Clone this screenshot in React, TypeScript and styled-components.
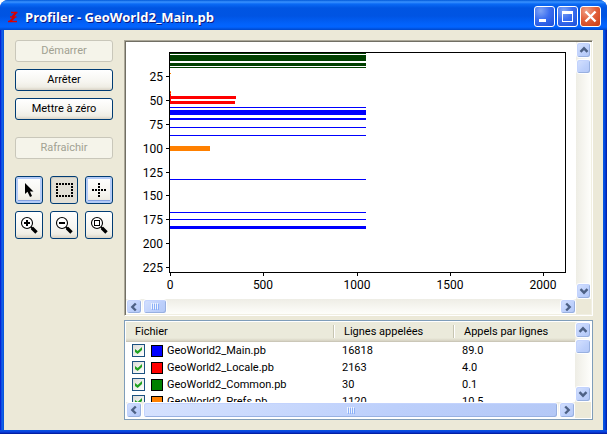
import React from "react";
import styled, { createGlobalStyle, css } from "styled-components";

const GlobalStyle = createGlobalStyle`
  * { box-sizing: border-box; }
  body { margin: 0; background: #fff; }
  button { font: inherit; padding: 0; margin: 0; }
`;

const AppWindow = styled.main`
  display: flex;
  flex-direction: column;
  min-height: 100vh;
  overflow: hidden;
  border-radius: 8px 8px 0 0;
  background: linear-gradient(90deg, #0019cf 0, #0831d9 1px, #166aee 2px, #0855dd 3px, #0855dd calc(100% - 3px), #0140e0 calc(100% - 2px), #001da0 100%);
  font-family: Roboto, "Liberation Sans", sans-serif;
  font-size: 12px;
  color: #000;
`;

const TitleBar = styled.header`
  display: flex;
  align-items: center;
  gap: 7px;
  height: 30px;
  padding: 3px 6px 0 8px;
  background: linear-gradient(180deg, #0058d8 0, #3a93ff 2px, #0a6af5 4px, #0055e2 8px, #0054e3 16px, #0262fb 24px, #0264ff 27px, #0047ca 30px);
`;

const Title = styled.h1`
  flex: 1;
  margin: 0;
  font-family: "Open Sans", "Noto Sans", sans-serif;
  font-size: 13px;
  line-height: 20px;
  font-weight: 700;
  color: #fff;
  text-shadow: 1px 1px 0 #0a1883;
  white-space: nowrap;
`;

const CaptionButtons = styled.div`
  display: flex;
  gap: 2px;
`;

const CaptionButton = styled.button<{ $danger?: boolean }>`
  display: flex;
  width: 21px;
  height: 21px;
  border: 1px solid #fff;
  border-radius: 3px;
  background: ${(p) =>
    p.$danger
      ? "radial-gradient(circle at 30% 20%, #f0a088 0, #e3613c 45%, #c93b12 100%)"
      : "radial-gradient(circle at 30% 20%, #7fa4f5 0, #3a6df0 45%, #1c4fd8 100%)"};
`;

const Body = styled.div`
  flex: 1;
  display: flex;
  gap: 11px;
  margin: 0 4px;
  padding: 10px 10px 10px 11px;
  background: #ece9d8;
`;

const BottomEdge = styled.div`
  height: 4px;
  background: linear-gradient(180deg, #0855dd, #0a3fe0 50%, #001590);
`;

const Sidebar = styled.div`
  display: flex;
  flex-direction: column;
  width: 98px;
  flex: none;
`;

const ButtonStack = styled.div`
  display: flex;
  flex-direction: column;
  gap: 7px;
  margin-bottom: 17px;
`;

const raised = css`
  border: 1px solid #003c74;
  border-radius: 3px;
  background: linear-gradient(180deg, #fff 0, #f6f5f0 60%, #efede4 85%, #d9d3c6 100%);
`;

const PushButton = styled.button`
  ${raised}
  height: 22px;
  line-height: 20px;
  font-size: 11px;
  color: #000;
  &:disabled {
    color: #a1a192;
    border-color: #c9c7ba;
    background: #f5f4ea;
  }
`;

const ToolGrid = styled.div`
  display: grid;
  grid-template-columns: repeat(3, 28px);
  justify-content: space-between;
  row-gap: 7px;
`;

const ToolButton = styled.button<{ $look?: "focus" | "pressed" }>`
  ${raised}
  display: grid;
  place-items: center;
  height: 28px;
  ${(p) => p.$look === "focus" && css`box-shadow: inset 0 0 0 2px #b4cbf7, inset 0 -3px 0 #829fe0;`}
  ${(p) => p.$look === "pressed" && css`background: #e2dfd5; box-shadow: inset 1px 1px 1px #cbc8bd;`}
`;

const Panels = styled.div`
  flex: 1;
  min-width: 0;
  display: flex;
  flex-direction: column;
  gap: 4px;
`;

const ChartPanel = styled.section`
  flex: 1;
  display: grid;
  grid-template: minmax(0, 1fr) 15px / minmax(0, 1fr) 15px;
  border: 1px solid;
  border-color: #aca899 #fff #fff #aca899;
  box-shadow: inset 1px 1px 0 #716f64, inset -1px -1px 0 #f1efe2;
  padding: 1px;
`;

const ChartSvg = styled.svg`
  display: block;
  width: 100%;
  height: 100%;
  background: #fff;
  font-family: Roboto, "Liberation Sans", sans-serif;
  font-size: 12px;
`;

const ListPanel = styled.section`
  display: grid;
  grid-template: minmax(0, 1fr) 16px / minmax(0, 1fr) 16px;
  height: 100px;
  border: 1px solid #7f9db9;
  background: #ece9d8;
  box-shadow: inset 0 0 0 1px #fff;
  padding: 1px;
`;

const ListView = styled.div`
  overflow: hidden;
  background: #fff;
`;

const Table = styled.table`
  width: 100%;
  table-layout: fixed;
  border-collapse: separate;
  border-spacing: 0;
  font-size: 11px;
`;

const Col = styled.col<{ $w?: number }>`
  width: ${(p) => (p.$w ? `${p.$w}px` : "auto")};
`;

const HeadCell = styled.th`
  height: 20px;
  padding: 0 0 0 9px;
  text-align: left;
  font-weight: 400;
  line-height: 18px;
  white-space: nowrap;
  border-bottom: 1px solid #cbc7b8;
  background:
    linear-gradient(#c7c5b2, #c7c5b2) right 1px top 3px / 1px 13px no-repeat,
    linear-gradient(#fff, #fff) right 0 top 3px / 1px 13px no-repeat,
    linear-gradient(180deg, #ebeadb 0, #ebeadb 16px, #d6d2c2 19px);
  &:last-child {
    background: linear-gradient(180deg, #ebeadb 0, #ebeadb 16px, #d6d2c2 19px);
  }
`;

const Cell = styled.td`
  height: 17px;
  padding: 0 0 0 7px;
  line-height: 17px;
  white-space: nowrap;
  &:first-child {
    padding-left: 6px;
  }
`;

const FileLabel = styled.label`
  display: flex;
  align-items: center;
  height: 17px;
`;

const Check = styled.input`
  appearance: none;
  width: 13px;
  height: 13px;
  margin: 0 6px 0 0;
  border: 1px solid #1c5180;
  background: linear-gradient(135deg, #dcdcd7, #fff);
  display: grid;
  place-items: center;
  &:checked::after {
    content: "";
    width: 7px;
    height: 7px;
    background: #21a121;
    clip-path: polygon(0 28%, 38% 57%, 100% 0, 100% 43%, 38% 100%, 0 71%);
  }
`;

const Swatch = styled.span<{ $color: string }>`
  width: 12px;
  height: 12px;
  margin-right: 4px;
  border: 1px solid #000;
  background: ${(p) => p.$color};
`;

const Track = styled.div<{ $dir: "v" | "h" }>`
  display: flex;
  flex-direction: ${(p) => (p.$dir === "v" ? "column" : "row")};
  gap: 1px;
  background: linear-gradient(${(p) => (p.$dir === "v" ? "90deg" : "180deg")}, #eeede5, #fefefb);
`;

const blue = css`
  border: 1px solid #fff;
  border-radius: 3px;
  background: linear-gradient(135deg, #d6e2fe, #bccffb 60%, #b4c8f6);
  box-shadow: inset -1px -1px 0 #98b0e0, inset 1px 1px 0 #c3d3fd;
`;

const Arrow = styled.button`
  ${blue}
  flex: 0 0 16px;
  display: grid;
  place-items: center;
`;

const EndArrow = styled(Arrow)<{ $dir: "v" | "h" }>`
  margin-top: ${(p) => (p.$dir === "v" ? "auto" : "0")};
  margin-left: ${(p) => (p.$dir === "h" ? "auto" : "0")};
`;

const Thumb = styled.div<{ $size?: number }>`
  ${blue}
  flex: ${(p) => (p.$size ? `0 0 ${p.$size}px` : "1")};
  display: grid;
  place-items: center;
`;

const Corner = styled.div`
  background: #ece9d8;
`;

const Chevron = ({ turn }: { turn: number }) => (
  <svg width="10" height="10" viewBox="0 0 10 10" aria-hidden="true">
    <path d="M1.5 6.8 L5 3.3 L8.5 6.8" fill="none" stroke="#4d6185" strokeWidth="2.4" transform={`rotate(${turn} 5 5)`} />
  </svg>
);

const Grip = () => (
  <svg width="8" height="7" viewBox="0 0 8 7" shapeRendering="crispEdges" aria-hidden="true">
    <path d="M0.5 0V6M2.5 0V6M4.5 0V6M6.5 0V6" stroke="#eef4fe" />
    <path d="M1.5 1V7M3.5 1V7M5.5 1V7M7.5 1V7" stroke="#8cb0f8" />
  </svg>
);

function ScrollBar({ dir, size, grip }: { dir: "v" | "h"; size?: number; grip?: boolean }) {
  const v = dir === "v";
  return (
    <Track $dir={dir}>
      <Arrow type="button" aria-label={v ? "Haut" : "Gauche"}><Chevron turn={v ? 0 : -90} /></Arrow>
      <Thumb $size={size}>{grip && <Grip />}</Thumb>
      <EndArrow $dir={dir} type="button" aria-label={v ? "Bas" : "Droite"}><Chevron turn={v ? 180 : 90} /></EndArrow>
    </Track>
  );
}

/* Bars of the histogram: [top, height, length, colour] */
const BARS: [number, number, number, string][] = [
  [11, 1, 196, "#004000"], [13, 6, 196, "#004000"], [21, 3, 196, "#004000"], [25, 1, 196, "#004000"],
  [31, 1, 1, "#ff8000"], [49, 1, 1, "#ff8000"], [50, 12, 1, "#ff0000"], [51, 1, 1, "#ff8000"],
  [54, 3, 66, "#ff0000"], [59, 3, 65, "#ff0000"],
  [65, 1, 196, "#0000ff"], [68, 5, 196, "#0000ff"], [76, 2, 196, "#0000ff"], [85, 1, 196, "#0000ff"],
  [93, 1, 196, "#0000ff"], [104, 5, 40, "#ff8000"], [137, 1, 196, "#0000ff"], [170, 1, 196, "#0000ff"],
  [177, 1, 196, "#0000ff"], [184, 3, 196, "#0000ff"],
];
const Y_TICKS: [number, number][] = [[34, 25], [58, 50], [82, 75], [106, 100], [130, 125], [153, 150], [177, 175], [201, 200], [225, 225]];
const X_TICKS: [number, number][] = [[44, 0], [137, 500], [231, 1000], [324, 1500], [417, 2000]];

const Chart = () => (
  <ChartSvg viewBox="0 0 450 257" preserveAspectRatio="xMinYMin meet" role="img" aria-label="Lignes appelées">
    <g shapeRendering="crispEdges">
      {BARS.map(([y, h, w, c], i) => <rect key={i} x={44} y={y} width={w} height={h} fill={c} />)}
      <rect x="43.5" y="10.5" width="396" height="220" fill="none" stroke="#000" />
      {Y_TICKS.map(([y]) => <rect key={y} x={40} y={y} width={3} height={1} />)}
      {X_TICKS.map(([x]) => <rect key={x} x={x} y={231} width={1} height={3} />)}
    </g>
    {Y_TICKS.map(([y, n]) => <text key={n} x={37} y={y + 5} textAnchor="end">{n}</text>)}
    {X_TICKS.map(([x, n]) => <text key={n} x={x} y={247} textAnchor="middle">{n}</text>)}
  </ChartSvg>
);

const Icon = ({ children }: { children: React.ReactNode }) => (
  <svg width="18" height="18" viewBox="0 0 18 18" aria-hidden="true">{children}</svg>
);

const Lens = ({ children }: { children: React.ReactNode }) => (
  <Icon>
    <circle cx="7" cy="7" r="5.5" fill="#fff" stroke="#000" strokeWidth="1.1" />
    <path d="M11 11 L12.5 12.5" stroke="#000" strokeWidth="2" />
    <path d="M12 12 L16.5 16.5" stroke="#000" strokeWidth="3.4" />
    <g shapeRendering="crispEdges">{children}</g>
  </Icon>
);

const FILES = [
  { name: "GeoWorld2_Main.pb", color: "#0000ff", lines: "16818", avg: "89.0" },
  { name: "GeoWorld2_Locale.pb", color: "#ff0000", lines: "2163", avg: "4.0" },
  { name: "GeoWorld2_Common.pb", color: "#008000", lines: "30", avg: "0.1" },
  { name: "GeoWorld2_Prefs.pb", color: "#ff8000", lines: "1120", avg: "10.5" },
];

export default function App() {
  return (
    <>
      <GlobalStyle />
      <AppWindow>
        <TitleBar>
          <svg width="10" height="12" viewBox="0 0 10 12" aria-hidden="true">
            <path d="M3 1.5H9.5M2 6H8.5M0 10.5H9" stroke="#e00000" strokeWidth="1.3" />
            <path d="M8 1.5L4.5 6M6.5 6L2 10.5" stroke="#d40000" strokeWidth="2.2" />
          </svg>
          <Title>Profiler - GeoWorld2_Main.pb</Title>
          <CaptionButtons>
            <CaptionButton type="button" aria-label="Réduire">
              <svg width="19" height="19" viewBox="0 0 19 19"><path d="M4 12h7v3H4z" fill="#fff" /></svg>
            </CaptionButton>
            <CaptionButton type="button" aria-label="Agrandir">
              <svg width="19" height="19" viewBox="0 0 19 19"><path d="M4 4h11v11H4zM5 7v7h9V7z" fill="#fff" fillRule="evenodd" /></svg>
            </CaptionButton>
            <CaptionButton $danger type="button" aria-label="Fermer">
              <svg width="19" height="19" viewBox="0 0 19 19"><path d="M4.5 4.5L14.5 14.5M14.5 4.5L4.5 14.5" stroke="#fff" strokeWidth="2.4" /></svg>
            </CaptionButton>
          </CaptionButtons>
        </TitleBar>
        <Body>
          <Sidebar>
            <ButtonStack>
              <PushButton type="button" disabled>Démarrer</PushButton>
              <PushButton type="button">Arrêter</PushButton>
              <PushButton type="button">Mettre à zéro</PushButton>
            </ButtonStack>
            <ButtonStack>
              <PushButton type="button" disabled>Rafraîchir</PushButton>
            </ButtonStack>
            <ToolGrid>
              <ToolButton $look="focus" type="button" aria-label="Pointeur">
                <Icon><path d="M5 2V13L7.5 10.8L10 16L12 15L10 10.5H13.5Z" /></Icon>
              </ToolButton>
              <ToolButton $look="pressed" type="button" aria-label="Sélection">
                <Icon>
                  <g shapeRendering="crispEdges" stroke="#000" strokeWidth="2">
                    <path d="M1 3H18M1 15H18" strokeDasharray="2 1" />
                    <path d="M2 2V16M17 2V16" strokeDasharray="2 1" />
                  </g>
                </Icon>
              </ToolButton>
              <ToolButton $look="focus" type="button" aria-label="Croix">
                <Icon>
                  <g shapeRendering="crispEdges" stroke="#000" strokeWidth="2">
                    <path d="M2 9H16M9 2V16" strokeDasharray="2 1" />
                  </g>
                </Icon>
              </ToolButton>
              <ToolButton type="button" aria-label="Zoom avant">
                <Lens><path d="M4 6h6v2H4zM6 4h2v6H6z" /></Lens>
              </ToolButton>
              <ToolButton type="button" aria-label="Zoom arrière">
                <Lens><path d="M4 6h6v2H4z" /></Lens>
              </ToolButton>
              <ToolButton type="button" aria-label="Zoom global">
                <Lens><rect x="4.5" y="4.5" width="5" height="5" fill="none" stroke="#000" /></Lens>
              </ToolButton>
            </ToolGrid>
          </Sidebar>
          <Panels>
            <ChartPanel>
              <Chart />
              <ScrollBar dir="v" size={15} />
              <ScrollBar dir="h" size={24} grip />
              <Corner />
            </ChartPanel>
            <ListPanel>
              <ListView>
                <Table>
                  <colgroup><Col $w={209} /><Col $w={120} /><Col /></colgroup>
                  <thead>
                    <tr>
                      <HeadCell scope="col">Fichier</HeadCell>
                      <HeadCell scope="col">Lignes appelées</HeadCell>
                      <HeadCell scope="col">Appels par lignes</HeadCell>
                    </tr>
                  </thead>
                  <tbody>
                    {FILES.map((f) => (
                      <tr key={f.name}>
                        <Cell>
                          <FileLabel>
                            <Check type="checkbox" defaultChecked />
                            <Swatch $color={f.color} />
                            {f.name}
                          </FileLabel>
                        </Cell>
                        <Cell>{f.lines}</Cell>
                        <Cell>{f.avg}</Cell>
                      </tr>
                    ))}
                  </tbody>
                </Table>
              </ListView>
              <ScrollBar dir="v" size={15} />
              <ScrollBar dir="h" grip />
              <Corner />
            </ListPanel>
          </Panels>
        </Body>
        <BottomEdge />
      </AppWindow>
    </>
  );
}
